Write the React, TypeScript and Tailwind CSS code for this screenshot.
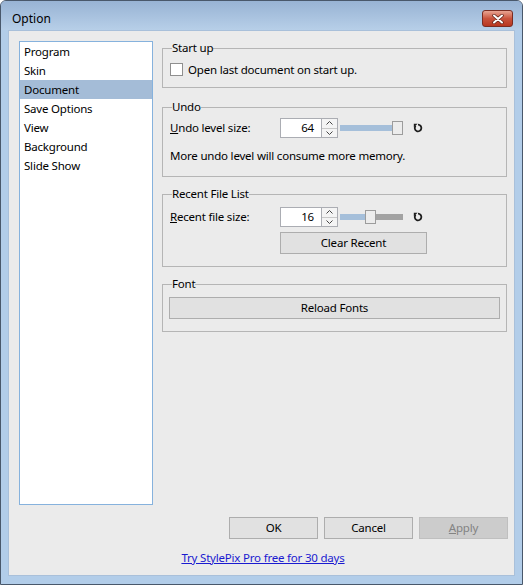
import React from "react";

const font = { fontFamily: '"Segoe UI", "Noto Sans", "Open Sans", sans-serif' };

const pages = ["Program", "Skin", "Document", "Save Options", "View", "Background", "Slide Show"];

function Chevron({ up }: { up?: boolean }) {
    return (
        <svg width="7" height="4" viewBox="0 0 7 4" className="block">
            <path
                d={up ? "M0.5 3.5 L3.5 0.5 L6.5 3.5" : "M0.5 0.5 L3.5 3.5 L6.5 0.5"}
                fill="none"
                stroke="#444"
                strokeWidth="1"
            />
        </svg>
    );
}

function Spin({ value }: { value: number }) {
    return (
        <div className="flex h-[20px]">
            <div className="w-[42px] h-full bg-white border border-[#abadb3] flex items-center justify-end pr-[7px]">
                {value}
            </div>
            <div className="w-[16px] h-full flex flex-col border border-l-0 border-[#abadb3] bg-[#f4f4f4]">
                <div className="flex-1 flex items-center justify-center border-b border-[#c8c8c8]">
                    <Chevron up />
                </div>
                <div className="flex-1 flex items-center justify-center">
                    <Chevron />
                </div>
            </div>
        </div>
    );
}

// pos: left edge of the thumb inside the 63px track
function Slider({ pos }: { pos: number }) {
    return (
        <div className="relative w-[63px] h-[14px] flex items-center">
            <div className="h-[6px] bg-[#a5bfda]" style={{ width: pos }} />
            <div className="h-[6px] flex-1 bg-[#a2a2a2]" />
            <div
                className="absolute top-0 w-[11px] h-[14px] bg-[#ececec] border border-[#9c9c9c]"
                style={{ left: pos }}
            />
        </div>
    );
}

function ResetIcon() {
    return (
        <svg width="10" height="10" viewBox="0 0 10 10" className="block">
            <path d="M2.6 2.8 A3.3 3.3 0 1 0 5 1.7" fill="none" stroke="#1e1e1e" strokeWidth="1.8" />
            <path d="M0.8 0.8 L4.6 0.8 L0.8 4.6 Z" fill="#1e1e1e" />
        </svg>
    );
}

function Group({ title, children, className = "" }: { title: string; children: React.ReactNode; className?: string }) {
    return (
        <fieldset className={`border border-[#b5b5b5] ${className}`}>
            <legend className="ml-[9px] leading-[14px] px-0">{title}</legend>
            {children}
        </fieldset>
    );
}

function Button({ children, disabled, className = "" }: { children: React.ReactNode; disabled?: boolean; className?: string }) {
    return (
        <div
            className={`h-[22px] flex items-center justify-center border ${
                disabled ? "bg-[#cccccc] border-[#bfbfbf] text-[#838383]" : "bg-[#e1e1e1] border-[#adadad] text-black"
            } ${className}`}
        >
            {children}
        </div>
    );
}

export default function App() {
    return (
        <div
            className="w-[523px] h-[585px] bg-[#b2cde9] border border-[#49586b] rounded-t-[6px] flex flex-col text-[11.5px] tracking-[-0.2px] text-black overflow-hidden"
            style={font}
        >
            {/* 타이틀 바 */}
            <div className="h-[29px] shrink-0 flex justify-between pl-[11px] pr-[9px] bg-gradient-to-b from-[#98b3d4] to-[#b7cfe8]">
                <div className="pt-[10px] leading-[16px] text-[12px] tracking-normal">Option</div>
                <div className="mt-[9px] w-[31px] h-[17px] rounded-[3px] border border-[#7a2c22] bg-gradient-to-b from-[#e8a493] via-[#c9533d] to-[#b8361f] flex items-center justify-center">
                    <svg width="12" height="10" viewBox="0 0 12 10">
                        <path d="M2 1.5 L10 8.5 M10 1.5 L2 8.5" stroke="#5a2018" strokeWidth="3.4" strokeLinecap="round" />
                        <path d="M2 1.5 L10 8.5 M10 1.5 L2 8.5" stroke="#ffffff" strokeWidth="2" strokeLinecap="round" />
                    </svg>
                </div>
            </div>

            {/* 본문 */}
            <div className="mx-[7px] h-[546px] bg-[#ebebeb] border border-[#a9c0da] pt-[10px] pl-[10px] pr-[7px] flex flex-col">
                <div className="flex gap-[9px] h-[464px]">
                    {/* 페이지 목록 */}
                    <div className="w-[134px] h-full bg-white border border-[#86b2dd]">
                        {pages.map((p) => (
                            <div
                                key={p}
                                className={`h-[19px] leading-[19px] pl-[4px] ${p === "Document" ? "bg-[#a4bcd7]" : ""}`}
                            >
                                {p}
                            </div>
                        ))}
                    </div>

                    {/* 설정 영역 */}
                    <div className="w-[345px] flex flex-col">
                        <Group title="Start up">
                            <div className="h-[32px] pl-[7px] pt-[8px] flex items-start gap-[5px]">
                                <div className="w-[13px] h-[13px] bg-white border border-[#8f8f8f]" />
                                <span className="leading-[13px]">Open last document on start up.</span>
                            </div>
                        </Group>

                        <Group title="Undo" className="mt-[12px]">
                            <div className="h-[62px] pl-[7px] pt-[4px]">
                                <div className="flex items-center h-[20px]">
                                    <span className="w-[110px]">
                                        <u>U</u>ndo level size:
                                    </span>
                                    <Spin value={64} />
                                    <div className="ml-[2px]">
                                        <Slider pos={52} />
                                    </div>
                                    <div className="ml-[10px]">
                                        <ResetIcon />
                                    </div>
                                </div>
                                <div className="mt-[11px] leading-[14px]">More undo level will consume more memory.</div>
                            </div>
                        </Group>

                        <Group title="Recent File List" className="mt-[10px]">
                            <div className="h-[65px] pl-[7px] pt-[6px]">
                                <div className="flex items-center h-[20px]">
                                    <span className="w-[110px]">
                                        <u>R</u>ecent file size:
                                    </span>
                                    <Spin value={16} />
                                    <div className="ml-[2px]">
                                        <Slider pos={25} />
                                    </div>
                                    <div className="ml-[10px]">
                                        <ResetIcon />
                                    </div>
                                </div>
                                <Button className="mt-[5px] ml-[110px] w-[147px]">Clear Recent</Button>
                            </div>
                        </Group>

                        <Group title="Font" className="mt-[10px]">
                            <div className="h-[40px] px-[6px] pt-[6px]">
                                <Button className="w-full">Reload Fonts</Button>
                            </div>
                        </Group>
                    </div>
                </div>

                {/* 버튼 */}
                <div className="mt-[12px] flex justify-end gap-[6px] mr-[-1px]">
                    <Button className="w-[89px]">OK</Button>
                    <Button className="w-[89px]">Cancel</Button>
                    <Button className="w-[89px]" disabled>
                        <span>
                            <u>A</u>pply
                        </span>
                    </Button>
                </div>

                <div className="mt-[12px] leading-[14px] text-center">
                    <span className="text-[#1a1ad0] underline">Try StylePix Pro free for 30 days</span>
                </div>
            </div>
        </div>
    );
}
